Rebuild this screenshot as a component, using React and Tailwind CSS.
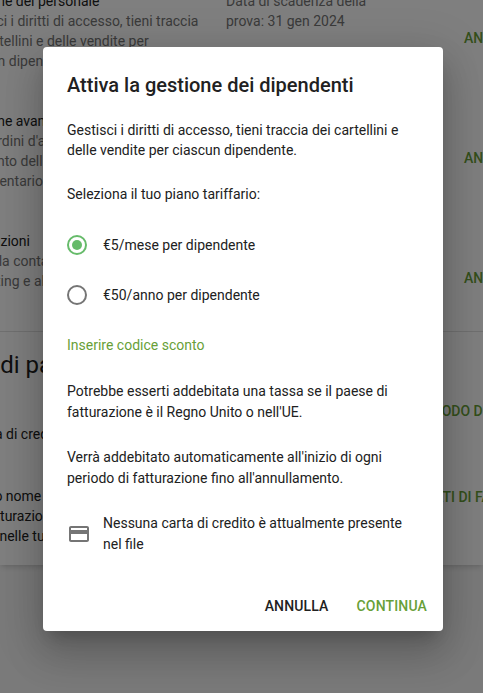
const font = { fontFamily: "Roboto, sans-serif" };

function BgRow({ title, lines, date, className = "" }) {
  return (
    <div className={`flex ${className}`}>
      <div className="w-[269px] shrink-0 text-sm leading-5 text-[#212121]">
        <div>{title}</div>
        {lines.map((l) => (
          <div key={l} className="whitespace-nowrap text-[#757575]">{l}</div>
        ))}
      </div>
      <div className="w-[238px] shrink-0 text-sm leading-5 text-[#757575]">
        {date && date.map((l) => <div key={l} className="whitespace-nowrap">{l}</div>)}
      </div>
      <div className="mt-[37px] whitespace-nowrap text-sm font-medium leading-5 text-[#689f38]">ANNULLA</div>
    </div>
  );
}

export default function App() {
  return (
    <div style={font} className="relative h-[693px] w-[483px] overflow-hidden bg-[#f5f5f5]">
      <div className="h-[565px] overflow-hidden bg-white shadow-md">
        <div className="-ml-[43px] -mt-[9px] w-[600px]">
          <BgRow
            title="Gestione dei personale"
            lines={["Gestisci i diritti di accesso, tieni traccia", "dei cartellini e delle vendite per", "ciascun dipendente."]}
            date={["Data di scadenza della", "prova: 31 gen 2024"]}
          />
          <BgRow
            className="mt-10"
            title="Gestione avanzata"
            lines={["Crea ordini d'acquisto", "Momento dell'ordine", "dell'inventario"]}
          />
          <BgRow
            className="mt-10"
            title="Integrazioni"
            lines={["Unisci la contabilità", "marketing e altri"]}
          />
        </div>
        <div className="mt-10 h-px w-full bg-[#e0e0e0]" />
        <div className="-ml-[88px] w-[700px]">
          <div className="mt-[17px] text-2xl leading-8 text-[#212121]">Metodo di pagamento</div>
          <div className="mt-5 flex">
            <div className="mt-[23px] w-[501px] shrink-0 whitespace-nowrap text-sm leading-5 text-[#212121]">Nessuna carta di credito</div>
            <div className="whitespace-nowrap text-sm font-medium leading-5 text-[#689f38]">METODO DI PAGAMENTO</div>
          </div>
          <div className="mt-[42px] flex">
            <div className="w-[513px] shrink-0 whitespace-nowrap text-sm leading-5 text-[#212121]">
              <div>Aggiorna il tuo nome</div>
              <div>Indirizzo di fatturazione</div>
              <div>che appaiono nelle tue fatture</div>
            </div>
            <div className="mt-px whitespace-nowrap text-sm font-medium leading-5 text-[#689f38]">DATI DI FATTURAZIONE</div>
          </div>
        </div>
      </div>

      <div className="absolute inset-0 flex items-start justify-start bg-black/50 pl-[43px] pt-[47px]">
        <div className="flex h-[584px] w-[400px] flex-col rounded bg-white px-6 shadow-[0_11px_15px_-7px_rgba(0,0,0,0.2),0_24px_38px_3px_rgba(0,0,0,0.14),0_9px_46px_8px_rgba(0,0,0,0.12)]">
          <h2 className="mt-6 text-xl font-medium leading-7 text-[#212121]">Attiva la gestione dei dipendenti</h2>
          <p className="mt-[21px] text-sm leading-5 text-[#212121]">
            Gestisci i diritti di accesso, tieni traccia dei cartellini e delle vendite per ciascun dipendente.
          </p>
          <p className="mt-6 text-sm leading-5 text-[#212121]">Seleziona il tuo piano tariffario:</p>

          <div className="mt-[31px] flex h-5 items-center gap-4">
            <span className="flex h-5 w-5 items-center justify-center rounded-full border-2 border-[#66bb6a]">
              <span className="h-2.5 w-2.5 rounded-full bg-[#66bb6a]" />
            </span>
            <span className="text-sm leading-5 text-[#212121]">€5/mese per dipendente</span>
          </div>
          <div className="mt-[30px] flex h-5 items-center gap-4">
            <span className="h-5 w-5 rounded-full border-2 border-[#757575]" />
            <span className="text-sm leading-5 text-[#212121]">€50/anno per dipendente</span>
          </div>

          <div className="mt-[30px] text-sm leading-5 text-[#689f38]">Inserire codice sconto</div>

          <p className="mt-[26px] text-sm leading-[21px] text-[#212121]">
            Potrebbe esserti addebitata una tassa se il paese di fatturazione è il Regno Unito o nell'UE.
          </p>
          <p className="mt-6 text-sm leading-[21px] text-[#212121]">
            Verrà addebitato automaticamente all'inizio di ogni periodo di fatturazione fino all'annullamento.
          </p>

          <div className="mt-6 flex items-center">
            <svg viewBox="0 0 24 24" className="h-6 w-6 shrink-0 fill-[#757575]">
              <path d="M20 4H4c-1.11 0-1.99.89-1.99 2L2 18c0 1.11.89 2 2 2h16c1.11 0 2-.89 2-2V6c0-1.11-.89-2-2-2zm0 14H4v-6h16v6zm0-10H4V6h16v2z" />
            </svg>
            <p className="ml-3 text-sm leading-[21px] text-[#212121]">
              Nessuna carta di credito è attualmente presente nel file
            </p>
          </div>

          <div className="-mr-2 mt-[41px] flex justify-end gap-7 text-sm font-medium leading-5 tracking-[0.15px]">
            <span className="text-[#212121]">ANNULLA</span>
            <span className="text-[#689f38]">CONTINUA</span>
          </div>
        </div>
      </div>
    </div>
  );
}
